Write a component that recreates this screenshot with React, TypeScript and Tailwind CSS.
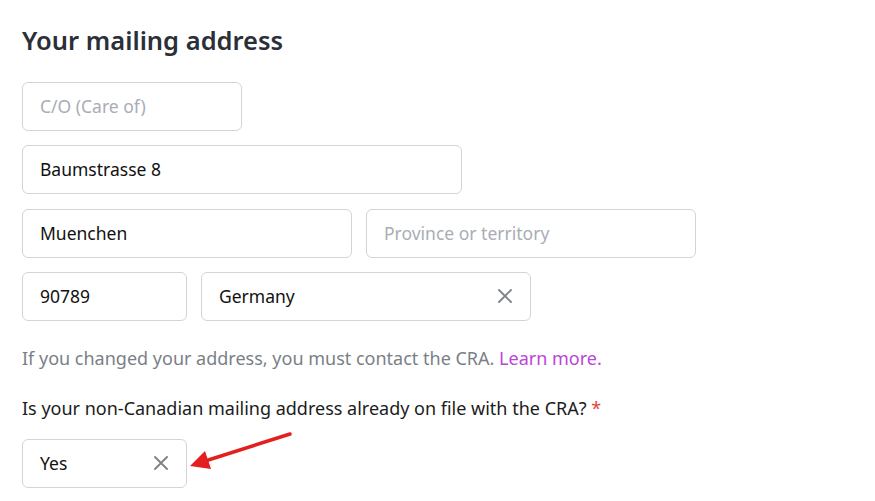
function ClearIcon() {
  return (
    <svg width="14" height="14" viewBox="0 0 14 14" className="shrink-0">
      <path d="M1 1 L13 13 M13 1 L1 13" stroke="#7d838b" strokeWidth="1.9" strokeLinecap="round" />
    </svg>
  )
}

function Field({ value, placeholder, width, clearable }: { value?: string; placeholder?: string; width: string; clearable?: boolean }) {
  return (
    <div className={`${width} h-[49px] flex items-center justify-between rounded-md border border-[#d1d5db] bg-white pl-[17px] pr-[18px] text-[17.5px]`}>
      {value ? (
        <span className="text-[#111111]">{value}</span>
      ) : (
        <span className="text-[#a9adb5]">{placeholder}</span>
      )}
      {clearable && <ClearIcon />}
    </div>
  )
}

export default function App() {
  return (
    <div className="min-h-screen bg-white px-[22px] pt-[26px] text-[18px] leading-[24px] font-['Noto_Sans',sans-serif] relative">
      <h1 className="text-[25.5px] font-semibold text-[#2b2f38] leading-none pt-[2px] mb-[28px]">Your mailing address</h1>
      <div className="flex flex-col gap-[14px]">
        <Field placeholder="C/O (Care of)" width="w-[220px]" />
        <Field value="Baumstrasse 8" width="w-[440px]" />
        <div className="flex gap-[14px] mt-[1px]">
          <Field value="Muenchen" width="w-[330px]" />
          <Field placeholder="Province or territory" width="w-[330px]" />
        </div>
        <div className="flex gap-[14px]">
          <Field value="90789" width="w-[165px]" />
          <Field value="Germany" width="w-[330px]" clearable />
        </div>
      </div>
      <p className="mt-[25px] text-[#7a7f87]">
        If you changed your address, you must contact the CRA. <span className="text-[#bb45d6]">Learn more.</span>
      </p>
      <p className="mt-[26px] text-[#1c1c1c]">
        Is your non-Canadian mailing address already on file with the CRA? <span className="text-[#e0483e]">*</span>
      </p>
      <div className="mt-[19px]">
        <Field value="Yes" width="w-[165px]" clearable />
      </div>
      <svg className="absolute left-0 top-0 pointer-events-none" width="875" height="501">
        <line x1="290" y1="434" x2="202" y2="462" stroke="#e3201f" strokeWidth="3.5" strokeLinecap="round" />
        <polygon points="190,466 205,451 211,469" fill="#e3201f" />
      </svg>
    </div>
  )
}
